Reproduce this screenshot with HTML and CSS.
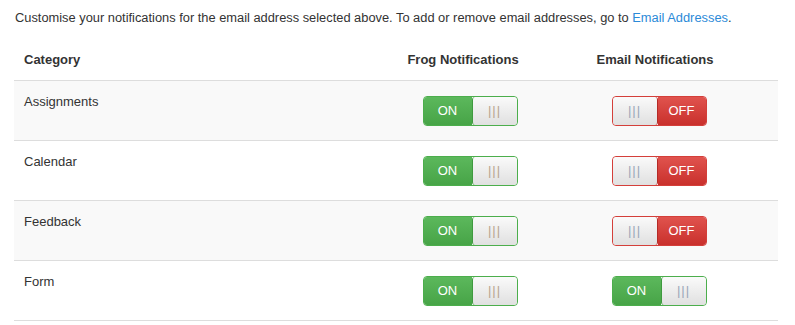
FILE: index.html
```html
<!DOCTYPE html>
<html lang="en">
  <head>
    <meta charset="UTF-8" />
    <meta name="viewport" content="width=device-width, initial-scale=1.0" />
    <title>Notifications</title>
    <link rel="stylesheet" href="styles.css">
  </head>
  <body>
    <div class="wrapper">
      <p class="intro">
        Customise your notifications for the email address selected above. To add or remove email addresses, go to
        <a href="">Email Addresses</a>.
      </p>
      <table class="prefs">
        <thead>
          <tr>
            <th class="cat">Category</th>
            <th class="frog">Frog Notifications</th>
            <th class="email">Email Notifications</th>
          </tr>
        </thead>
        <tbody>
          <tr>
            <td class="cat">Assignments</td>
            <td class="frog">
              <span class="switch on"><span class="label">ON</span><span class="handle">|||</span></span>
            </td>
            <td class="email">
              <span class="switch off"><span class="handle">|||</span><span class="label">OFF</span></span>
            </td>
          </tr>
          <tr>
            <td class="cat">Calendar</td>
            <td class="frog">
              <span class="switch on"><span class="label">ON</span><span class="handle">|||</span></span>
            </td>
            <td class="email">
              <span class="switch off"><span class="handle">|||</span><span class="label">OFF</span></span>
            </td>
          </tr>
          <tr>
            <td class="cat">Feedback</td>
            <td class="frog">
              <span class="switch on"><span class="label">ON</span><span class="handle">|||</span></span>
            </td>
            <td class="email">
              <span class="switch off"><span class="handle">|||</span><span class="label">OFF</span></span>
            </td>
          </tr>
          <tr>
            <td class="cat">Form</td>
            <td class="frog">
              <span class="switch on"><span class="label">ON</span><span class="handle">|||</span></span>
            </td>
            <td class="email">
              <span class="switch on"><span class="label">ON</span><span class="handle">|||</span></span>
            </td>
          </tr>
        </tbody>
      </table>
    </div>
  </body>
</html>
```

FILE: styles.css
```css
* {
  box-sizing: border-box;
}
body {
  margin: 0;
  font-family: "Liberation Sans", Arial, sans-serif;
  font-size: 13px;
  color: #333;
  background: #fff;
}
a {
  text-decoration: none;
  color: #2b8ad8;
}

.wrapper {
  padding: 8px 17px 0 14px;
}
.wrapper > .intro {
  margin: 0 0 12px 1px;
  line-height: 20px;
  font-size: 12.85px;
}

.prefs {
  width: 764px;
  border-collapse: collapse;
  table-layout: fixed;
}
.prefs th {
  height: 40px;
  padding: 0 10px;
  font-weight: bold;
  vertical-align: middle;
  border-bottom: 1px solid #ddd;
}
.prefs td {
  height: 60px;
  padding: 12px 10px;
  vertical-align: top;
  line-height: 18px;
  border-bottom: 1px solid #ddd;
}
.prefs tbody tr:nth-child(odd) {
  background-color: #f9f9f9;
}
.prefs .cat {
  width: 354px;
  text-align: left;
}
.prefs .frog {
  width: 190px;
  text-align: center;
}
.prefs .email {
  width: 220px;
  text-align: center;
  padding-right: 36px;
}
.prefs td.frog,
.prefs td.email {
  padding-top: 15px;
  padding-bottom: 0;
}
.prefs td.frog {
  padding-left: 24px;
}
.prefs td.email {
  padding-left: 18px;
}

/* 토글 스위치 */
.switch {
  display: inline-flex;
  height: 30px;
  width: 95px;
  border: 1px solid;
  border-radius: 4px;
  overflow: hidden;
  vertical-align: top;
  line-height: 28px;
  font-size: 13px;
}
.switch > .label {
  width: 48px;
  color: #fff;
  text-align: center;
}
.switch > .handle {
  flex: 1;
  color: #9aa6b8;
  letter-spacing: 1px;
  text-align: center;
  background: linear-gradient(#fafafa, #e0e0e0);
  border-radius: 3px;
}
.frog .switch > .handle {
  color: #b8a48e;
}
.switch.on {
  border-color: #4cae4c;
}
.switch.on > .label {
  background: linear-gradient(#5cb85c, #47a447);
}
.switch.on > .handle {
  border-left: 1px solid #3f9a3f;
}
.switch.off {
  border-color: #d43f3a;
}
.switch.off > .label {
  background: linear-gradient(#e0534e, #c9302c);
}
.switch.off > .handle {
  border-right: 1px solid #b52b27;
}
```
